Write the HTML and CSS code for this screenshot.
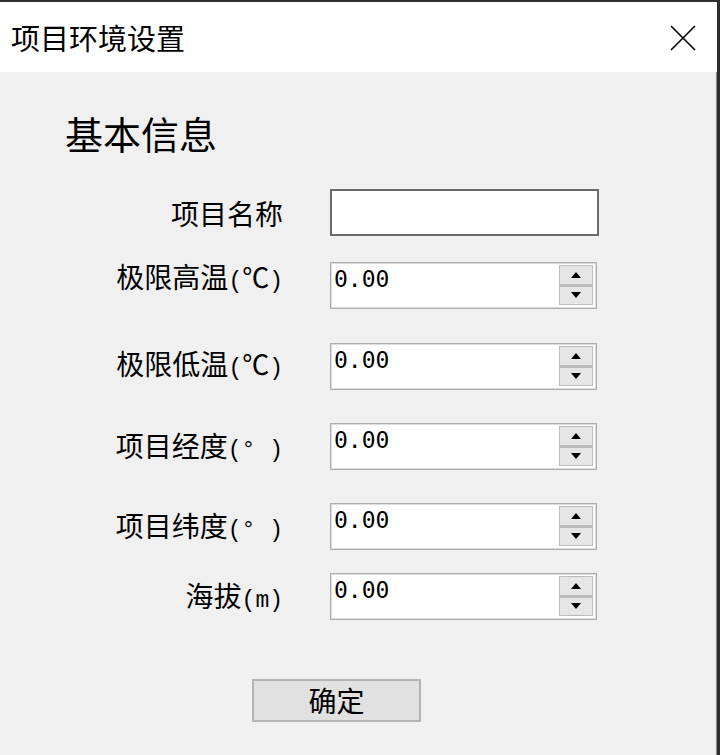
FILE: index.html
```html
<!DOCTYPE html>
<html lang="zh-CN">
<head>
    <meta charset="UTF-8">
    <meta name="viewport" content="width=device-width, initial-scale=1.0">
    <title>项目环境设置</title>
    <link rel="stylesheet" href="styles.css">
</head>
<body>
    <div class="window">
        <div class="titlebar">
            <span class="title">项目环境设置</span>
            <button class="close" aria-label="关闭">
                <svg width="26" height="26" viewBox="0 0 26 26">
                    <path d="M1 1L25 25M25 1L1 25" stroke="#000" stroke-width="1.6" fill="none"/>
                </svg>
            </button>
        </div>
        <div class="content">
            <div class="heading">基本信息</div>
            <div class="form">
                <div class="row">
                    <span class="label">项目名称</span>
                    <input class="text-input" type="text">
                </div>
                <div class="row row-high">
                    <span class="label">极限高温<span class="unit">(<span class="cjk">℃</span>)</span></span>
                    <div class="spin">
                        <span class="spin-value">0.00</span>
                        <div class="spin-buttons">
                            <div class="spin-up"><i class="arrow-up"></i></div>
                            <div class="spin-down"><i class="arrow-down"></i></div>
                        </div>
                    </div>
                </div>
                <div class="row row-low">
                    <span class="label">极限低温<span class="unit">(<span class="cjk">℃</span>)</span></span>
                    <div class="spin">
                        <span class="spin-value">0.00</span>
                        <div class="spin-buttons">
                            <div class="spin-up"><i class="arrow-up"></i></div>
                            <div class="spin-down"><i class="arrow-down"></i></div>
                        </div>
                    </div>
                </div>
                <div class="row row-lng">
                    <span class="label">项目经度<span class="unit">(° )</span></span>
                    <div class="spin">
                        <span class="spin-value">0.00</span>
                        <div class="spin-buttons">
                            <div class="spin-up"><i class="arrow-up"></i></div>
                            <div class="spin-down"><i class="arrow-down"></i></div>
                        </div>
                    </div>
                </div>
                <div class="row row-lat">
                    <span class="label">项目纬度<span class="unit">(° )</span></span>
                    <div class="spin">
                        <span class="spin-value">0.00</span>
                        <div class="spin-buttons">
                            <div class="spin-up"><i class="arrow-up"></i></div>
                            <div class="spin-down"><i class="arrow-down"></i></div>
                        </div>
                    </div>
                </div>
                <div class="row row-alt">
                    <span class="label">海拔<span class="unit">(m)</span></span>
                    <div class="spin">
                        <span class="spin-value">0.00</span>
                        <div class="spin-buttons">
                            <div class="spin-up"><i class="arrow-up"></i></div>
                            <div class="spin-down"><i class="arrow-down"></i></div>
                        </div>
                    </div>
                </div>
            </div>
            <div class="actions">
                <button class="ok-button">确定</button>
            </div>
        </div>
    </div>
</body>
</html>
```

FILE: styles.css
```css
body{
    margin: 0;
    font-family: "Noto Sans CJK SC", "Noto Sans", sans-serif;
    color: #000;
}
.window{
    width: 720px;
    height: 755px;
    box-sizing: border-box;
    border-top: 2px solid #2e2e2e;
    border-right: 3px solid #2e2e2e;
    box-shadow: inset -1px 0 #8c8c8c;
    background-color: #f0f0f0;
    overflow: hidden;
}
.titlebar{
    height: 70px;
    background-color: #fff;
    display: flex;
    align-items: center;
    justify-content: space-between;
    padding: 0 21px 0 11px;
}
.title{
    font-size: 29px;
    line-height: 1;
}
.close{
    border: none;
    background: none;
    padding: 0;
    display: flex;
    margin-top: 2px;
}
.content{
    padding-top: 42px;
}
.heading{
    font-size: 38px;
    line-height: 38px;
    padding-left: 65px;
}
.form{
    margin-top: 37px;
}
.row{
    display: flex;
    align-items: center;
    height: 47px;
}
.row-high{
    margin-top: 26px;
}
.row-low{
    margin-top: 34px;
}
.row-lng,
.row-lat{
    margin-top: 33px;
}
.row-alt{
    margin-top: 23px;
}
.label{
    width: 283px;
    text-align: right;
    font-size: 28px;
    line-height: 1;
    margin-right: 47px;
    white-space: nowrap;
}
.unit{
    font-family: "Liberation Mono", monospace;
    font-size: 23px;
}
.unit .cjk{
    font-family: "Noto Sans CJK SC", sans-serif;
    font-size: 27px;
}
.row-high .label{
    margin-bottom: 16px;
}
.row-low .label{
    margin-bottom: 4px;
}
.text-input{
    width: 269px;
    height: 47px;
    box-sizing: border-box;
    border: 2px solid #6a6a6a;
    background-color: #fff;
    margin: 0;
    outline: none;
}
.spin{
    width: 267px;
    height: 47px;
    box-sizing: border-box;
    border: 1px solid #acacac;
    box-shadow: inset 0 0 0 1px #dcdcdc;
    background-color: #fff;
    display: flex;
    padding: 2px 3px 3px 2px;
}
.spin-value{
    flex: 1;
    font-family: "DejaVu Sans Mono", monospace;
    font-size: 23px;
    line-height: 23px;
    padding-top: 3px;
    padding-left: 1px;
}
.spin-buttons{
    width: 34px;
    display: flex;
    flex-direction: column;
}
.spin-up,
.spin-down{
    flex: 1;
    background-color: #e6e6e6;
    border: 1px solid #bdbdbd;
    display: flex;
    align-items: center;
    justify-content: center;
}
.spin-down{
    border-top-width: 2px;
}
.arrow-up{
    border-left: 5px solid transparent;
    border-right: 5px solid transparent;
    border-bottom: 6px solid #000;
}
.arrow-down{
    border-left: 5px solid transparent;
    border-right: 5px solid transparent;
    border-top: 6px solid #000;
}
.actions{
    margin-top: 59px;
    padding-left: 252px;
}
.ok-button{
    width: 169px;
    height: 43px;
    border: 2px solid #b4b4b4;
    background-color: #e1e1e1;
    font-family: "Noto Sans CJK SC", sans-serif;
    font-size: 28px;
    line-height: 1;
    color: #000;
    padding: 0 0 2px;
}
```
